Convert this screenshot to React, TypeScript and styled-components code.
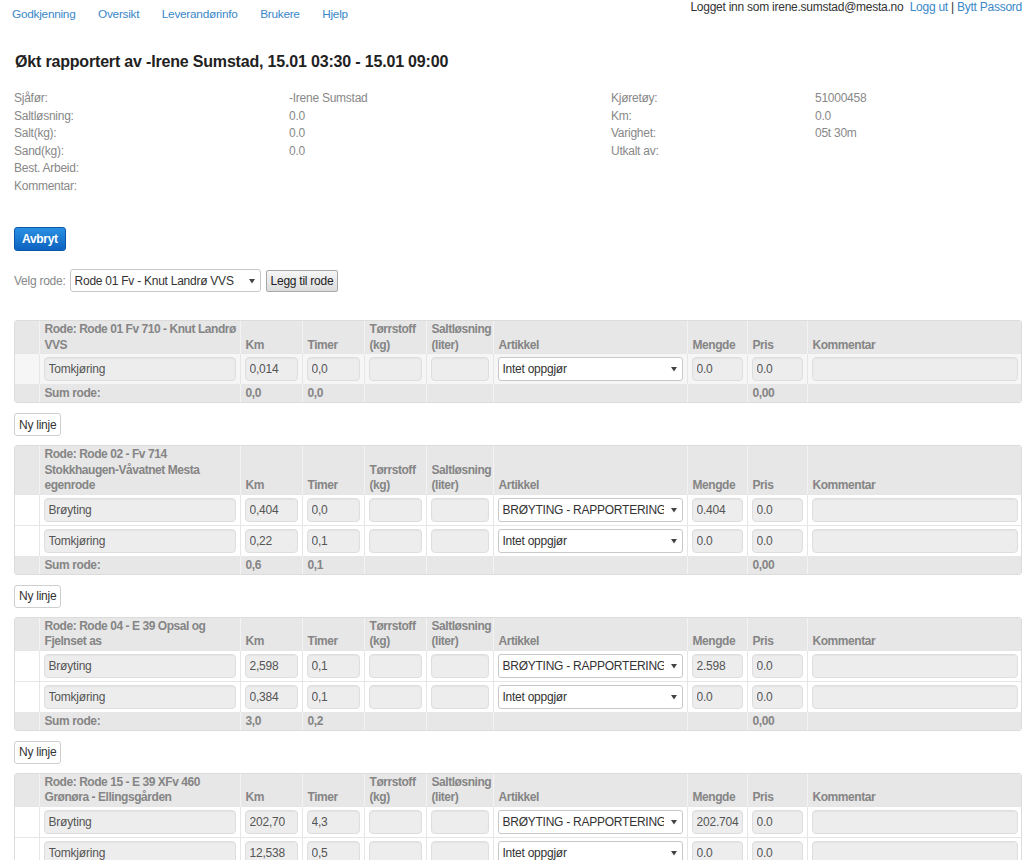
import React from 'react'
import styled, { createGlobalStyle } from 'styled-components'

const GlobalStyle = createGlobalStyle`
  body {
    margin: 0;
    background: #fff;
    font-family: 'Liberation Sans', Arial, sans-serif;
    font-size: 12px;
    letter-spacing: -0.25px;
    color: #333;
  }
`

const Page = styled.div`
  padding: 0 2px 0 14px;
`

const TopBar = styled.div`
  display: flex;
  justify-content: space-between;
  align-items: flex-start;
  height: 30px;
  margin-left: -2px;
`

const NavLinks = styled.nav`
  display: flex;
  gap: 22.5px;
  padding-top: 7px;
  font-size: 11.8px;
`

const Link = styled.a`
  color: #3a87c8;
  text-decoration: none;
  line-height: 14px;
`

const UserInfo = styled.div`
  line-height: 14px;
  color: #333;
  span {
    color: #3a87c8;
  }
`

const Title = styled.h1`
  font-size: 16px;
  line-height: 20px;
  font-weight: bold;
  letter-spacing: -0.18px;
  color: #222;
  margin: 22px 0 0 1px;
`

const InfoGrid = styled.div`
  display: grid;
  grid-template-columns: 275px 322px 204px 1fr;
  grid-auto-rows: 17.5px;
  margin-top: 18px;
  color: #888;
  line-height: 17.5px;
`

const PrimaryButton = styled.button`
  display: block;
  margin-top: 32px;
  height: 24px;
  padding: 0 7px;
  font: bold 12px 'Liberation Sans', Arial, sans-serif;
  letter-spacing: -0.3px;
  color: #fff;
  background: linear-gradient(#2b90e2, #0c62c0);
  border: 1px solid #0b58ab;
  border-radius: 3px;
`

const PickRow = styled.div`
  display: flex;
  align-items: center;
  gap: 4px;
  margin-top: 18px;
  color: #888;
`

const SelectWrap = styled.div<{ $width: string }>`
  position: relative;
  width: ${({ $width }) => $width};
`

const Select = styled.select<{ $height: number }>`
  appearance: none;
  width: 100%;
  height: ${({ $height }) => $height}px;
  padding: 0 18px 0 4px;
  font: 12px 'Liberation Sans', Arial, sans-serif;
  letter-spacing: -0.25px;
  color: #333;
  background: #fff;
  border: 1px solid #c8c8c8;
  border-radius: 3px;
`

const Arrow = styled.svg`
  position: absolute;
  right: 6px;
  top: 50%;
  margin-top: -3px;
  pointer-events: none;
`

const GrayButton = styled.button`
  height: 22px;
  margin-left: 1px;
  padding: 0 4px;
  font: 12px 'Liberation Sans', Arial, sans-serif;
  letter-spacing: -0.25px;
  color: #222;
  background: linear-gradient(#f6f6f6, #dcdcdc);
  border: 1px solid #a8a8a8;
  border-radius: 2px;
`

const TableBox = styled.div`
  margin-top: 28px;
  border: 1px solid #dcdcdc;
  border-radius: 3px;
  overflow: hidden;
`

const Table = styled.table`
  width: 100%;
  border-collapse: collapse;
  table-layout: fixed;
`

const HeadCell = styled.th`
  background: #e7e7e7;
  color: #858585;
  font-weight: bold;
  letter-spacing: -0.45px;
  text-align: left;
  vertical-align: bottom;
  line-height: 15.5px;
  padding: 1px 0 0 5px;
  border-left: 1px solid #f3f3f3;
  &:first-child {
    border-left: none;
  }
`

const Row = styled.tr<{ $shade?: boolean }>`
  background: ${({ $shade }) => ($shade ? '#f6f6f6' : '#fff')};
`

const Cell = styled.td`
  padding: 3px 4px;
  border-top: 1px solid #e6e6e6;
  border-left: 1px solid #e6e6e6;
  &:first-child {
    border-left: none;
  }
`

const SumCell = styled.td`
  background: #e7e7e7;
  color: #858585;
  font-weight: bold;
  letter-spacing: -0.4px;
  line-height: 16px;
  padding: 1px 5px;
  border-left: 1px solid #f3f3f3;
  &:first-child {
    border-left: none;
  }
`

const Field = styled.input<{ $numeric?: boolean }>`
  box-sizing: border-box;
  display: block;
  width: 100%;
  height: 24px;
  padding: 0 ${({ $numeric }) => ($numeric ? '12px' : '3px')} 0 4px;
  font: 12px 'Liberation Sans', Arial, sans-serif;
  letter-spacing: -0.2px;
  color: #555;
  background: #ededed;
  border: 1px solid #dedede;
  border-radius: 4px;
  box-shadow: inset 0 1px 1px rgba(0, 0, 0, 0.04);
`

const SmallButton = styled.button`
  display: block;
  margin: 10px 0 9px;
  height: 23px;
  padding: 0 4px;
  font: 12px 'Liberation Sans', Arial, sans-serif;
  letter-spacing: -0.25px;
  color: #333;
  background: #fff;
  border: 1px solid #cfcfcf;
  border-radius: 3px;
  & + ${TableBox} {
    margin-top: 0;
  }
`

const DropArrow = () => (
  <Arrow width='6' height='6' viewBox='0 0 6 6'>
    <path d='M0 1 L6 1 L3 5.5 Z' fill='#444' />
  </Arrow>
)

const Dropdown = ({ value, width, height }: { value: string; width: string; height: number }) => (
  <SelectWrap $width={width}>
    <Select $height={height} defaultValue={value}>
      <option>{value}</option>
    </Select>
    <DropArrow />
  </SelectWrap>
)

type Line = { name: string; km: string; timer: string; artikkel: string; mengde: string }
type Rode = { title: string; lines: Line[]; sumKm: string; sumTimer: string; shadeFirst?: boolean }

const roder: Rode[] = [
  {
    title: 'Rode: Rode 01 Fv 710 - Knut Landrø VVS',
    shadeFirst: true,
    lines: [{ name: 'Tomkjøring', km: '0,014', timer: '0,0', artikkel: 'Intet oppgjør', mengde: '0.0' }],
    sumKm: '0,0',
    sumTimer: '0,0',
  },
  {
    title: 'Rode: Rode 02 - Fv 714 Stokkhaugen-Våvatnet Mesta egenrode',
    lines: [
      { name: 'Brøyting', km: '0,404', timer: '0,0', artikkel: 'BRØYTING - RAPPORTERING MED KM', mengde: '0.404' },
      { name: 'Tomkjøring', km: '0,22', timer: '0,1', artikkel: 'Intet oppgjør', mengde: '0.0' },
    ],
    sumKm: '0,6',
    sumTimer: '0,1',
  },
  {
    title: 'Rode: Rode 04 - E 39 Opsal og Fjelnset as',
    lines: [
      { name: 'Brøyting', km: '2,598', timer: '0,1', artikkel: 'BRØYTING - RAPPORTERING MED KM', mengde: '2.598' },
      { name: 'Tomkjøring', km: '0,384', timer: '0,1', artikkel: 'Intet oppgjør', mengde: '0.0' },
    ],
    sumKm: '3,0',
    sumTimer: '0,2',
  },
  {
    title: 'Rode: Rode 15 - E 39 XFv 460 Grønøra - Ellingsgården',
    lines: [
      { name: 'Brøyting', km: '202,704', timer: '4,3', artikkel: 'BRØYTING - RAPPORTERING MED KM', mengde: '202.704' },
      { name: 'Tomkjøring', km: '12,538', timer: '0,5', artikkel: 'Intet oppgjør', mengde: '0.0' },
    ],
    sumKm: '215,2',
    sumTimer: '4,8',
  },
]

const widths = [24, 201, 62, 62, 62, 67, 194, 60, 60, 215]

const RodeTable = ({ rode }: { rode: Rode }) => (
  <TableBox>
    <Table>
      <colgroup>
        {widths.map((w, i) => (
          <col key={i} style={{ width: w }} />
        ))}
      </colgroup>
      <thead>
        <tr>
          <HeadCell />
          <HeadCell>{rode.title}</HeadCell>
          <HeadCell>Km</HeadCell>
          <HeadCell>Timer</HeadCell>
          <HeadCell>Tørrstoff (kg)</HeadCell>
          <HeadCell>Saltløsning (liter)</HeadCell>
          <HeadCell>Artikkel</HeadCell>
          <HeadCell>Mengde</HeadCell>
          <HeadCell>Pris</HeadCell>
          <HeadCell>Kommentar</HeadCell>
        </tr>
      </thead>
      <tbody>
        {rode.lines.map((line, i) => (
          <Row key={i} $shade={rode.shadeFirst && i === 0}>
            <Cell />
            <Cell><Field readOnly value={line.name} /></Cell>
            <Cell><Field readOnly $numeric value={line.km} /></Cell>
            <Cell><Field readOnly $numeric value={line.timer} /></Cell>
            <Cell><Field readOnly value='' /></Cell>
            <Cell><Field readOnly value='' /></Cell>
            <Cell><Dropdown value={line.artikkel} width='100%' height={24} /></Cell>
            <Cell><Field readOnly value={line.mengde} /></Cell>
            <Cell><Field readOnly value='0.0' /></Cell>
            <Cell><Field readOnly value='' /></Cell>
          </Row>
        ))}
        <tr>
          <SumCell />
          <SumCell>Sum rode:</SumCell>
          <SumCell>{rode.sumKm}</SumCell>
          <SumCell>{rode.sumTimer}</SumCell>
          <SumCell />
          <SumCell />
          <SumCell />
          <SumCell />
          <SumCell>0,00</SumCell>
          <SumCell />
        </tr>
      </tbody>
    </Table>
  </TableBox>
)

const info: [string, string, string, string][] = [
  ['Sjåfør:', '-Irene Sumstad', 'Kjøretøy:', '51000458'],
  ['Saltløsning:', '0.0', 'Km:', '0.0'],
  ['Salt(kg):', '0.0', 'Varighet:', '05t 30m'],
  ['Sand(kg):', '0.0', 'Utkalt av:', ''],
  ['Best. Arbeid:', '', '', ''],
  ['Kommentar:', '', '', ''],
]

export default function App() {
  return (
    <>
      <GlobalStyle />
      <Page>
        <TopBar>
          <NavLinks>
            <Link href='#'>Godkjenning</Link>
            <Link href='#'>Oversikt</Link>
            <Link href='#'>Leverandørinfo</Link>
            <Link href='#'>Brukere</Link>
            <Link href='#'>Hjelp</Link>
          </NavLinks>
          <UserInfo>
            Logget inn som irene.sumstad@mesta.no&nbsp; <span>Logg ut</span> | <span>Bytt Passord</span>
          </UserInfo>
        </TopBar>
        <Title>Økt rapportert av -Irene Sumstad, 15.01 03:30 - 15.01 09:00</Title>
        <InfoGrid>
          {info.map((row, i) => row.map((text, j) => <div key={`${i}-${j}`}>{text}</div>))}
        </InfoGrid>
        <PrimaryButton>Avbryt</PrimaryButton>
        <PickRow>
          Velg rode:
          <Dropdown value='Rode 01 Fv - Knut Landrø VVS' width='191px' height={23} />
          <GrayButton>Legg til rode</GrayButton>
        </PickRow>
        {roder.map((rode, i) => (
          <React.Fragment key={i}>
            <RodeTable rode={rode} />
            <SmallButton>Ny linje</SmallButton>
          </React.Fragment>
        ))}
      </Page>
    </>
  )
}
